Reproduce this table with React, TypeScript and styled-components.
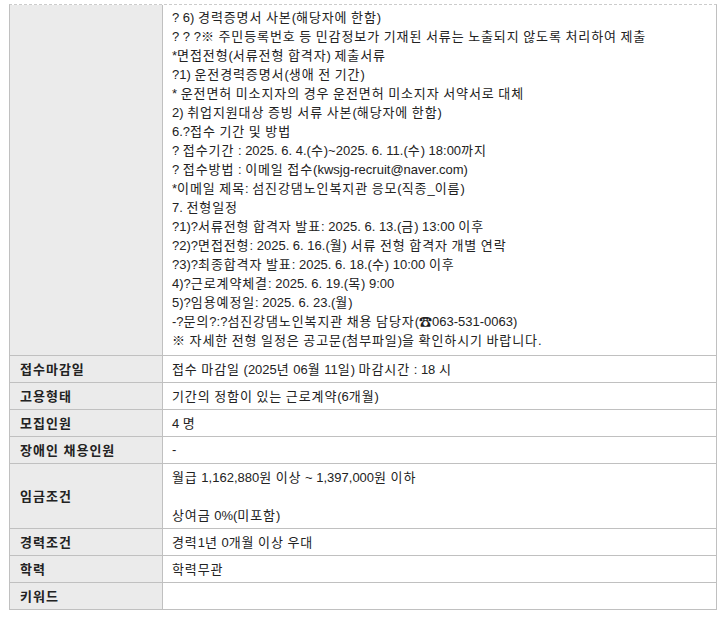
import { Fragment } from "react"
import styled, { createGlobalStyle } from "styled-components"

const GlobalStyle = createGlobalStyle`
  html, body {
    margin: 0;
    padding: 0;
    background: #fff;
  }
  body {
    font-family: "Liberation Sans", "Noto Sans CJK KR", sans-serif;
  }
`

const Wrap = styled.div`
  padding: 4px 0 0 9px;
`

const Table = styled.div`
  display: grid;
  grid-template-columns: 153px 1fr;
  width: 708px;
  box-sizing: border-box;
  border-top: 1px dashed #cccccc;
  border-left: 1px solid #c0c0c0;
  border-right: 1px solid #c0c0c0;
  font-size: 13px;
  line-height: 19px;
`

const Label = styled.div`
  display: flex;
  align-items: center;
  padding: 0 10px;
  background-color: #ebebeb;
  border-right: 1px solid #c0c0c0;
  border-bottom: 1px solid #c0c0c0;
  font-weight: bold;
  letter-spacing: 1px;
  color: #222;
`

const Value = styled.div<{ $tall?: boolean }>`
  padding: ${p => (p.$tall ? "2px 9px 6px" : "3px 9px 4px")};
  border-bottom: 1px solid #c0c0c0;
  color: #222;
  white-space: nowrap;
`

const Line = styled.div`
  height: 19px;
`

// hangul runs get a touch of extra width, like the bitmap korean font
const Ko = styled.span`
  font-family: "Noto Sans CJK KR", sans-serif;
  letter-spacing: 0.9px;
`

const detail = [
  "? 6) 경력증명서 사본(해당자에 한함)",
  "? ? ?※ 주민등록번호 등 민감정보가 기재된 서류는 노출되지 않도록 처리하여 제출",
  "*면접전형(서류전형 합격자) 제출서류",
  "?1) 운전경력증명서(생애 전 기간)",
  "* 운전면허 미소지자의 경우 운전면허 미소지자 서약서로 대체",
  "2) 취업지원대상 증빙 서류 사본(해당자에 한함)",
  "6.?접수 기간 및 방법",
  "? 접수기간 : 2025. 6. 4.(수)~2025. 6. 11.(수) 18:00까지",
  "? 접수방법 : 이메일 접수(kwsjg-recruit@naver.com)",
  "*이메일 제목: 섬진강댐노인복지관 응모(직종_이름)",
  "7. 전형일정",
  "?1)?서류전형 합격자 발표: 2025. 6. 13.(금) 13:00 이후",
  "?2)?면접전형: 2025. 6. 16.(월) 서류 전형 합격자 개별 연락",
  "?3)?최종합격자 발표: 2025. 6. 18.(수) 10:00 이후",
  "4)?근로계약체결: 2025. 6. 19.(목) 9:00",
  "5)?임용예정일: 2025. 6. 23.(월)",
  "-?문의?:?섬진강댐노인복지관 채용 담당자(☎063-531-0063)",
  "※ 자세한 전형 일정은 공고문(첨부파일)을 확인하시기 바랍니다.",
]

const rows: { label: string; lines: string[] }[] = [
  { label: "접수마감일", lines: ["접수 마감일 (2025년 06월 11일) 마감시간 : 18 시"] },
  { label: "고용형태", lines: ["기간의 정함이 있는 근로계약(6개월)"] },
  { label: "모집인원", lines: ["4 명"] },
  { label: "장애인 채용인원", lines: ["-"] },
  { label: "임금조건", lines: ["월급 1,162,880원 이상 ~ 1,397,000원 이하", "", "상여금 0%(미포함)"] },
  { label: "경력조건", lines: ["경력1년 0개월 이상 우대"] },
  { label: "학력", lines: ["학력무관"] },
  { label: "키워드", lines: [""] },
]

const hangul = /([\uAC00-\uD7A3\u3130-\u318F※]+)/

function Text({ text }: { text: string }) {
  return (
    <Line>
      {text.split(hangul).map((part, i) =>
        i % 2 === 1 ? <Ko key={i}>{part}</Ko> : <Fragment key={i}>{part}</Fragment>
      )}
    </Line>
  )
}

export default function App() {
  return (
    <Wrap>
      <GlobalStyle />
      <Table>
        <Label />
        <Value $tall>
          {detail.map((l, i) => (
            <Text key={i} text={l} />
          ))}
        </Value>
        {rows.map(r => (
          <Fragment key={r.label}>
            <Label>{r.label}</Label>
            <Value>
              {r.lines.map((l, i) => (
                <Text key={i} text={l} />
              ))}
            </Value>
          </Fragment>
        ))}
      </Table>
    </Wrap>
  )
}
